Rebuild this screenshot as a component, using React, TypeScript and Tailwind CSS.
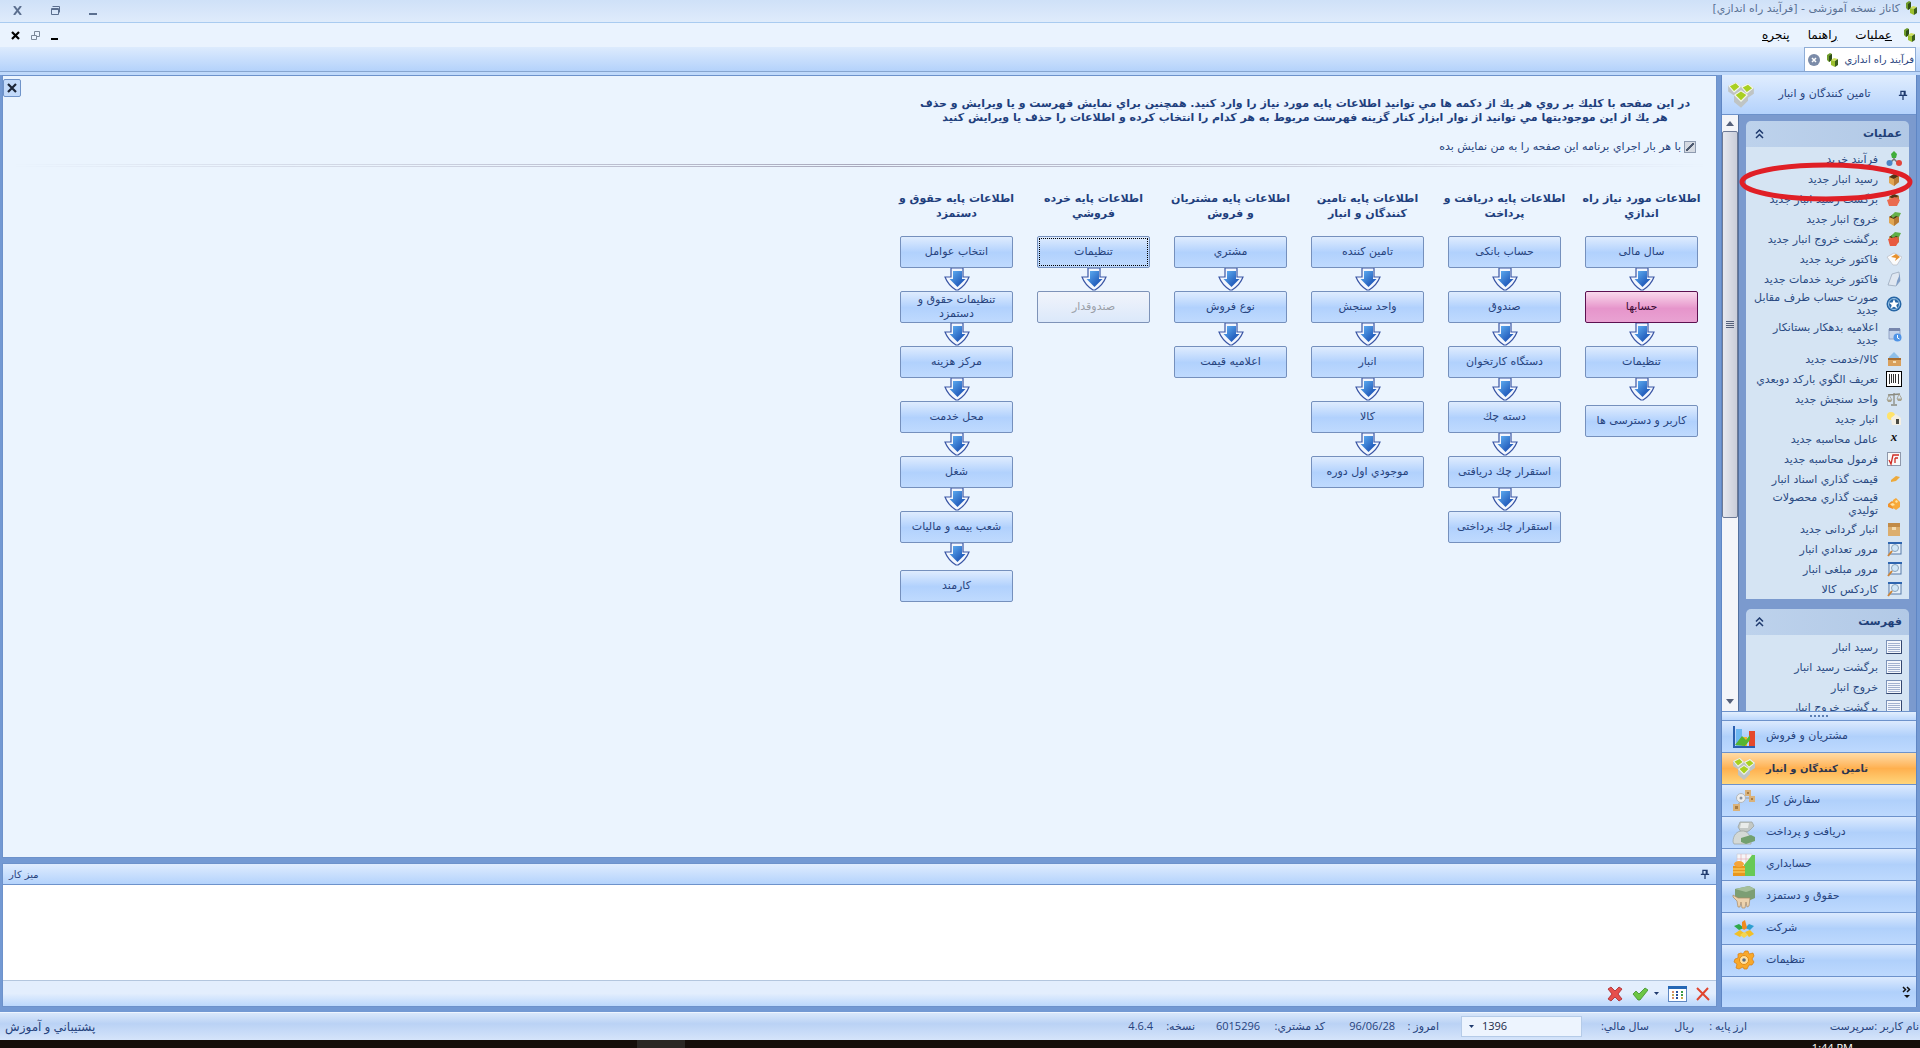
import { useState } from 'react'
import type { ReactNode } from 'react'

type Step = { label: string; state?: 'active' | 'focused' | 'disabled'; spaced?: boolean }

interface Column {
  title: [string, string]
  steps: Step[]
}

const COLUMNS: Column[] = [
  {
    title: ['اطلاعات مورد نیاز راه', 'اندازي'],
    steps: [
      { label: 'سال مالی' },
      { label: 'حسابها', state: 'active' },
      { label: 'تنظیمات' },
      { label: 'كاربر و دسترسی ها', spaced: true },
    ],
  },
  {
    title: ['اطلاعات پایه دریافت و', 'پرداخت'],
    steps: [
      { label: 'حساب بانكی' },
      { label: 'صندوق' },
      { label: 'دستگاه كارتخوان' },
      { label: 'دسته چك' },
      { label: 'استقرار چك دریافتی' },
      { label: 'استقرار چك پرداختی' },
    ],
  },
  {
    title: ['اطلاعات پایه تامین', 'كنندگان و انبار'],
    steps: [
      { label: 'تامین كننده' },
      { label: 'واحد سنجش' },
      { label: 'انبار' },
      { label: 'كالا' },
      { label: 'موجودي اول دوره' },
    ],
  },
  {
    title: ['اطلاعات پایه مشتریان', 'و فروش'],
    steps: [{ label: 'مشتري' }, { label: 'نوع فروش' }, { label: 'اعلامیه قیمت' }],
  },
  {
    title: ['اطلاعات پایه خرده', 'فروشي'],
    steps: [
      { label: 'تنظیمات', state: 'focused' },
      { label: 'صندوقدار', state: 'disabled' },
    ],
  },
  {
    title: ['اطلاعات پایه حقوق و', 'دستمزد'],
    steps: [
      { label: 'انتخاب عوامل' },
      { label: 'تنظیمات حقوق و دستمزد' },
      { label: 'مركز هزینه' },
      { label: 'محل خدمت' },
      { label: 'شغل' },
      { label: 'شعب بیمه و مالیات' },
      { label: 'كارمند', spaced: true },
    ],
  },
]

function Logo() {
  return (
    <svg className="h-4 w-4 shrink-0" viewBox="0 0 16 16">
      <path d="M3 3l3-2 2 1v6L5 10 3 8z" fill="#6f9c2c" />
      <path d="M5 4l3-2v6l-3 2z" fill="#2f4d18" />
      <path d="M7 8l3-2 4 1-3 2z" fill="#cfe05a" />
      <path d="M7 8l4 1v6l-4-2z" fill="#9cc02e" />
      <path d="M11 9l3-2v6l-3 2z" fill="#3c5f1c" />
    </svg>
  )
}

function Box({ arrow }: { arrow?: string }) {
  return (
    <>
      <path d="M3 6l5-3 5 2v6l-5 4-5-3z" fill="#e0a552" />
      <path d="M3 6l5 2 5-3-5-2z" fill="#4f3416" />
      <path d="M8 8l5-3v6l-5 4z" fill="#b87a34" />
      {arrow && <path d="M5 5l4-4 6 1-2 4-3-1-3 2z" fill={arrow} />}
    </>
  )
}

function Lens() {
  return (
    <>
      <rect x="3" y="2" width="12" height="11" fill="#e6f0fa" stroke="#587aa8" />
      <path d="M2 1h14v2H2z" fill="#2f66b0" />
      <circle cx="9" cy="7" r="3.500" fill="#cfe6f8" stroke="#8aa3ba" />
      <path d="M6 10l-4 5" stroke="#c9843a" strokeWidth="2" />
    </>
  )
}

function List() {
  return (
    <>
      <rect x=".5" y="1.500" width="15" height="13" fill="#f4f7fc" stroke="#7c93b8" />
      <path d="M15.500 1.500v13H.5" fill="none" stroke="#33466e" />
      <path d="M2 4.500h12M2 6.500h12M2 8.500h12M2 10.500h12M2 12.500h12" stroke="#a3b2d0" />
    </>
  )
}

interface Item {
  lines: string[]
  icon: ReactNode
  marked?: boolean
}

const OPERATIONS: Item[] = [
  {
    lines: ['فرآیند خرید'],
    icon: (
      <>
        <path d="M8 5v4M8 8l-4 4M8 8l4 4" stroke="#777" strokeWidth="1.500" />
        <path d="M8 0l3 3-1 4H6L5 3z" fill="#3fae3a" />
        <circle cx="3.500" cy="12" r="3" fill="#4d86c6" />
        <circle cx="13" cy="12" r="3" fill="#e2463c" />
      </>
    ),
  },
  { lines: ['رسید انبار جدید'], icon: <Box />, marked: true },
  {
    lines: ['برگشت رسید انبار جدید'],
    icon: (
      <>
        <Box />
        <path d="M1 9l8-3 5 3-3 6H3z" fill="#ea6a4f" />
      </>
    ),
  },
  { lines: ['خروج انبار جدید'], icon: <Box arrow="#66b04a" /> },
  {
    lines: ['برگشت خروج انبار جدید'],
    icon: (
      <>
        <Box arrow="#5fae48" />
        <path d="M2 8l8-2 3 4-3 5H4z" fill="#e8593f" />
      </>
    ),
  },
  {
    lines: ['فاكتور خرید جدید'],
    icon: (
      <>
        <path d="M1 6l7-4 8 4-5 8-4 0z" fill="#fbfbfb" stroke="#b9bcc4" strokeWidth=".7" />
        <path d="M5 6l5-3 4 3-5 4 1-3z" fill="#e8912c" />
      </>
    ),
  },
  {
    lines: ['فاكتور خرید خدمات جدید'],
    icon: (
      <>
        <path d="M6 3l7-2 1 9-4 5-8-1z" fill="#dfe7f1" stroke="#9aa9bd" strokeWidth=".8" />
        <path d="M10 15l4-5V3l-3 7z" fill="#7d9dc8" />
      </>
    ),
  },
  {
    lines: ['صورت حساب طرف مقابل', 'جدید'],
    icon: (
      <>
        <circle cx="8" cy="8" r="7.500" fill="#2565a5" />
        <circle cx="8" cy="8" r="5.500" fill="none" stroke="#9cc7ea" />
        <path d="M8 3l1.500 3.500 3.500.3-2.700 2.200.9 3.600L8 10.700l-3.200 1.900.9-3.600L3 6.800l3.500-.3z" fill="#fff" />
      </>
    ),
  },
  {
    lines: ['اعلامیه بدهكار بستانكار', 'جدید'],
    icon: (
      <>
        <path d="M3 3h11v10H3z" fill="#c4d2ea" stroke="#8496bd" strokeWidth=".8" />
        <path d="M3 2h11v3H3z" fill="#7686ad" />
        <circle cx="11.500" cy="11.500" r="4" fill="#4f93e6" />
        <path d="M11.500 9v3l2 1" stroke="#fff" fill="none" />
      </>
    ),
  },
  {
    lines: ['كالا/خدمت جدید'],
    icon: (
      <>
        <path d="M3 6l5-5 5 5v3H3z" fill="#8fbfe8" />
        <path d="M2 7h13v8H2z" fill="#d9a05c" />
        <path d="M2 7h13v2H2z" fill="#a76b2d" />
        <path d="M7 10h3v2H7z" fill="#f4dfb8" />
      </>
    ),
  },
  {
    lines: ['تعریف الگوي باركد دوبعدي'],
    icon: (
      <>
        <rect x=".5" y=".5" width="15" height="15" fill="#fff" stroke="#000" />
        <path d="M3.500 3v10M5.500 3v9M7.500 3v9M9.500 3v9M12.500 3v10" stroke="#333" />
      </>
    ),
  },
  {
    lines: ['واحد سنجش جدید'],
    icon: (
      <>
        <path d="M8 2v11M5 14h6M2 4l12-1" stroke="#8b8b80" strokeWidth="1.300" />
        <path d="M3 4L1 9h5L3 4M13 3l-2 5h5l-3-5" fill="none" stroke="#a09a86" strokeWidth=".8" />
        <path d="M1 9h5l-1 2H2zM11 8h5l-1 2h-3z" fill="#a9a38d" />
      </>
    ),
  },
  {
    lines: ['انبار جدید'],
    icon: (
      <>
        <circle cx="5" cy="5" r="4" fill="#ffe36a" />
        <path d="M5 7l5-4 5 4v7H6z" fill="#f3efe4" />
        <path d="M10 8h3v5h-3z" fill="#4a4a42" />
      </>
    ),
  },
  {
    lines: ['عامل محاسبه جدید'],
    icon: (
      <text x="8" y="10" textAnchor="middle" fontSize="13" fontWeight="bold" fontStyle="italic" fontFamily="Liberation Serif, serif" fill="#111">
        x
      </text>
    ),
  },
  {
    lines: ['فرمول محاسبه جدید'],
    icon: (
      <>
        <rect x="1.500" y="1.500" width="13" height="13" fill="#f8f8f8" stroke="#8e98ab" />
        <path d="M3 9l2 4 2-9h6M9 7h3M9 7v5" fill="none" stroke="#d02c24" strokeWidth="1.300" />
      </>
    ),
  },
  { lines: ['قیمت گذاري اسناد انبار'], icon: <path d="M5 9l5-4 4 1-4 4-5 1z" fill="#eda93b" /> },
  {
    lines: ['قیمت گذاري محصولات', 'تولیدي'],
    icon: (
      <>
        <path d="M2 8l4-3 4 3-3 5-5-2z" fill="#f0932b" />
        <path d="M7 4l3-2 4 4v5l-4 3-4-3z" fill="#f7a93a" />
        <path d="M4 8l3-1 2 2-3 1zM9 5l2-1 1 2-2 1z" fill="#ffe3a0" />
      </>
    ),
  },
  {
    lines: ['انبار گردانی جدید'],
    icon: (
      <>
        <path d="M2 2h12v13H2z" fill="#dcae6e" />
        <path d="M2 2h12v4H2z" fill="#c18b48" />
        <path d="M6 6h4v3H6z" fill="#f2dbb0" />
      </>
    ),
  },
  { lines: ['مرور تعدادي انبار'], icon: <Lens /> },
  { lines: ['مرور مبلغی انبار'], icon: <Lens /> },
  { lines: ['كاردكس كالا'], icon: <Lens /> },
]

const LISTS: Item[] = [
  { lines: ['رسید انبار'], icon: <List /> },
  { lines: ['برگشت رسید انبار'], icon: <List /> },
  { lines: ['خروج انبار'], icon: <List /> },
  { lines: ['برگشت خروج انبار'], icon: <List /> },
]

function Supply() {
  return (
    <>
      <path d="M1 4l7-3 4 4v5l-5 3-6-4zM12 5l6-3 5 4v5l-6 4-5-4zM6 12l6-4 6 4v5l-6 6-6-5z" fill="#bfc4c4" />
      <path d="M1 4l7-3 4 4-6 5zM12 5l6-3 5 4-6 5zM6 12l6-4 6 4-6 6z" fill="#f3f6ea" />
      <path d="M2.500 4.500l5-2.500 3 3-4.500 3.500zM13.500 5.500l4.500-2.300 3.500 3L17 9.500zM7.500 12l4.500-3 4.500 3-4.500 4.500z" fill="#a9d021" />
    </>
  )
}

const MODULES: { label: string; icon: ReactNode }[] = [
  {
    label: 'مشتریان و فروش',
    icon: (
      <>
        <path d="M2 1v21h21" fill="none" stroke="#2a5fb0" strokeWidth="2" />
        <path d="M4 4h6v17H4z" fill="#6db7f2" />
        <path d="M10 12h5v9h-5z" fill="#f3b72c" />
        <path d="M17 6h6v15h-6z" fill="#e5482c" />
        <path d="M3 20l7-9 4 4 4-5v5l-5 6z" fill="#55b531" />
      </>
    ),
  },
  { label: 'تامین كنندگان و انبار', icon: <Supply /> },
  {
    label: 'سفارش كار',
    icon: (
      <>
        <path d="M5 18l5-9h10" fill="none" stroke="#9a9a9a" />
        <path d="M1 15h7v7H1zM13 1h6v6h-6zM17 7h6v6h-6z" fill="#dab27a" />
        <path d="M3 17h3v3H3zM15 3h2v2h-2zM19 9h2v2h-2z" fill="#a87c42" />
        <circle cx="9" cy="9" r="4.500" fill="#eceeef" stroke="#b3b7bb" />
        <circle cx="9" cy="9" r="1.500" fill="#8c93a0" />
      </>
    ),
  },
  {
    label: 'دریافت و پرداخت',
    icon: (
      <>
        <path d="M8 1h12l2 4-4 4-3 2H9L6 6z" fill="#c3c8c5" stroke="#979e99" strokeWidth=".7" />
        <path d="M9 2l8 0-1 5H8z" fill="#e9ecea" />
        <path d="M1 21c0-7 4-11 9-11s6 2 9 7v6H2z" fill="#d4d9d6" stroke="#9ba29d" strokeWidth=".7" />
        <path d="M9 17l10-3 4 2v4l-9 3-5-2z" fill="#72a06f" />
      </>
    ),
  },
  {
    label: 'حسابداري',
    icon: (
      <>
        <path d="M5 1h15v14H5z" fill="#f6f6f8" stroke="#c8ccd8" strokeWidth=".7" />
        <path d="M9 1v14M14 1v14M5 6h14" stroke="#e3aeb5" strokeWidth=".7" />
        <path d="M12 12l5-6 3-4h3v21H12z" fill="#68c956" />
        <path d="M1 13h12v10H1z" fill="#e9971e" />
        <ellipse cx="7" cy="11" rx="5" ry="3" fill="#f5a53a" />
        <path d="M1 16h12M1 19h12" stroke="#ffdc73" />
      </>
    ),
  },
  {
    label: 'حقوق و دستمزد',
    icon: (
      <>
        <path d="M3 4l14-3 6 3v9l-7 3-13-2z" fill="#7c9e74" />
        <path d="M3 4l14-3 6 3-9 3z" fill="#a5bf9b" />
        <path d="M1 10l5 3h12l-1 8-2 1-1-5-1 6h-3l-1-6-1 5H6l-1-6-4-4z" fill="#ecd2ae" stroke="#a98b66" strokeWidth=".7" />
      </>
    ),
  },
  {
    label: 'شركت',
    icon: (
      <>
        <path d="M2 9l5-2 5 4-5 2z" fill="#2fa84a" />
        <path d="M22 9l-5-2-4 4 5 2z" fill="#2e9fd0" />
        <path d="M10 5l3-2 2 8-3 2-2-2z" fill="#f08a1f" />
        <path d="M2 17l6-4 4 3-4 4zM13 15l5-2 4 4-5 3z" fill="#f2bf27" />
        <path d="M8 18l4-3 4 3-4 3z" fill="#f5d54d" />
      </>
    ),
  },
  {
    label: 'تنظیمات',
    icon: (
      <>
        <path
          d="M13 2l3 0 1 3 4-1 1 3-2 3 2 3-2 3-3 0-2 4-3 0-1-2-4 2-3-1 1-4-3-2 1-3 3-1 0-4 3-1 2 1z"
          fill="#f8a82a"
          stroke="#d97d10"
          strokeWidth=".7"
        />
        <circle cx="12" cy="11" r="4.500" fill="#ffe0a0" stroke="#e08a15" />
        <circle cx="12" cy="11" r="1.800" fill="#5a6a80" />
      </>
    ),
  },
]

function Pin() {
  return (
    <svg className="h-[10px] w-[10px]" viewBox="0 0 12 12" fill="none" stroke="#1f3a6e" strokeWidth="1.500">
      <path d="M3.500 1.500h5v5h-5zM7.500 1.500v5M1 6.500h10M6 7v5" />
    </svg>
  )
}

function DownArrow() {
  return (
    <svg className="mx-auto block h-[23px] w-[26px]" viewBox="0 0 26 23">
      <defs>
        <linearGradient id="arrowFill" x1="0" y1="0" x2="1" y2="1">
          <stop offset="0" stopColor="#63b4f6" />
          <stop offset="1" stopColor="#0d3fa8" />
        </linearGradient>
      </defs>
      <path d="M7 0v9H1q3 8 11 13h2q8-5 11-13h-6V0z" fill="#f3f7fe" stroke="#3a56a5" strokeWidth="1.200" />
      <path d="M9 3h9v8h3.500L13.500 19 5.500 11H9z" fill="url(#arrowFill)" />
    </svg>
  )
}

function StepButton({ step }: { step: Step }) {
  let look = 'border-[#7590bd] bg-linear-to-b from-[#dfecfe] from-0% via-[#b1d1fd] via-52% to-[#bfdafe] text-[#27437d]'
  if (step.state === 'active') look = 'border-[#5c1050] bg-linear-to-b from-[#f8d9ec] from-0% via-[#e695cb] via-55% to-[#e9a2d2] text-[#3a0b33]'
  if (step.state === 'disabled') look = 'border-[#7e93b8] bg-linear-to-b from-[#f1f4fb] to-[#dbe8fa] text-[#9a9fa8]'
  return (
    <button
      type="button"
      disabled={step.state === 'disabled'}
      className={`flex h-8 w-[113px] items-center justify-center rounded-[2px] border p-px ${look}`}
    >
      <span
        className={
          step.state === 'focused'
            ? 'flex h-full w-full items-center justify-center border border-dotted border-black leading-[14px]'
            : 'leading-[14px]'
        }
      >
        {step.label}
      </span>
    </button>
  )
}

function Group({ title, items }: { title: string; items: Item[] }) {
  return (
    <section className="shrink-0">
      <h2 className="flex h-[26px] items-center justify-between rounded-t-[5px] bg-linear-to-l from-[#b2c9e6] to-[#bdd2ec] px-[7px] text-[11px] font-bold text-[#1f3f78]">
        {title}
        <button type="button" aria-label={title} className="px-[2px]">
          <svg className="h-[10px] w-[9px]" viewBox="0 0 9 10" fill="none" stroke="#1f3a6e" strokeWidth="1.500">
            <path d="M1 4.500L4.500 1 8 4.500M1 9l3.500-3.500L8 9" />
          </svg>
        </button>
      </h2>
      <ul className="bg-[#d5e4f3] pt-[2px]">
        {items.map((item) => (
          <li key={item.lines[0]} className="relative">
            <a
              href="#"
              className={`flex items-center gap-2 pr-[7px] leading-[13px] whitespace-nowrap text-[#2a4a82] ${item.lines.length > 1 ? 'h-[30px]' : 'h-5'}`}
            >
              <svg className="h-4 w-4 shrink-0" viewBox="0 0 16 16">
                {item.icon}
              </svg>
              <span>
                {item.lines.map((line) => (
                  <span key={line} className="block">
                    {line}
                  </span>
                ))}
              </span>
            </a>
            {item.marked && (
              <svg className="pointer-events-none absolute -top-2 -left-2 z-10 h-[42px] w-[176px]" viewBox="0 0 176 42">
                <ellipse cx="88" cy="21" rx="84" ry="17" fill="none" stroke="#e01f26" strokeWidth="5" />
              </svg>
            )}
          </li>
        ))}
      </ul>
    </section>
  )
}

function Sidebar() {
  const [current, setCurrent] = useState(1)
  return (
    <aside className="flex w-[196px] shrink-0 flex-col border-x border-[#5f86c4] bg-[#7b9ace]">
      <header className="flex h-10 shrink-0 items-center justify-between border-b border-[#6d92cb] bg-linear-to-b from-[#e0edfe] to-[#b4d2fc] pr-1 pl-[5px] text-[#27437d]">
        <span className="px-1">
          <Pin />
        </span>
        <span>تامین كنندگان و انبار</span>
        <svg className="h-7 w-7" viewBox="0 0 24 24">
          <Supply />
        </svg>
      </header>

      <div className="flex min-h-0 flex-1">
        <div className="flex min-w-0 flex-1 flex-col gap-[10px] overflow-hidden px-[7px] pt-[6px]">
          <Group title="عملیات" items={OPERATIONS} />
          <Group title="فهرست" items={LISTS} />
        </div>
        <div className="flex w-[17px] shrink-0 flex-col border-r border-[#54719f] bg-[#f4f5f9]">
          <svg className="h-4 w-4" viewBox="0 0 16 16">
            <path d="M4 11l4-5 4 5z" fill="#55607a" />
          </svg>
          <div className="flex flex-[2] flex-col items-center justify-center gap-px rounded-[2px] border border-[#6d7a96] bg-linear-to-r from-[#e6e8ef] to-[#c9cdd9]">
            <i className="h-px w-2 bg-[#56617b]" />
            <i className="h-px w-2 bg-[#56617b]" />
            <i className="h-px w-2 bg-[#56617b]" />
            <i className="h-px w-2 bg-[#56617b]" />
          </div>
          <div className="flex flex-1 flex-col justify-end">
            <svg className="h-5 w-4" viewBox="0 0 16 20">
              <path d="M4 8l4 5 4-5z" fill="#55607a" />
            </svg>
          </div>
        </div>
      </div>

      <div className="flex h-[9px] shrink-0 items-center justify-center gap-[2px] border-t border-[#6d92cb] bg-linear-to-b from-[#e3effe] to-[#bcd7fc]">
        <i className="h-[2px] w-[2px] bg-[#5e7fb3]" />
        <i className="h-[2px] w-[2px] bg-[#5e7fb3]" />
        <i className="h-[2px] w-[2px] bg-[#5e7fb3]" />
        <i className="h-[2px] w-[2px] bg-[#5e7fb3]" />
        <i className="h-[2px] w-[2px] bg-[#5e7fb3]" />
      </div>
      <nav className="shrink-0">
        {MODULES.map((m, i) => (
          <button
            key={m.label}
            type="button"
            onClick={() => setCurrent(i)}
            className={`flex h-8 w-full items-center justify-end gap-[10px] border-t border-[#6d92cb] bg-linear-to-b pl-[10px] ${
              i === current
                ? 'from-[#ffdca6] from-0% via-[#ffb04e] via-50% to-[#ffd57a] text-[10px] font-bold text-[#2a3550]'
                : 'from-[#dceafe] from-0% via-[#b0d0fb] via-50% to-[#bdd9fe] text-[#27437d]'
            }`}
          >
            {m.label}
            <svg className="h-6 w-6" viewBox="0 0 24 24">
              {m.icon}
            </svg>
          </button>
        ))}
      </nav>
      <div className="flex h-[31px] shrink-0 items-center border-t border-[#6d92cb] bg-linear-to-b from-[#dceafe] from-0% via-[#b0d0fb] via-50% to-[#bdd9fe] px-1">
        <button type="button" aria-label="بیشتر">
          <svg className="h-3 w-[10px]" viewBox="0 0 10 12">
            <path d="M1 1l2.500 2.500L1 6M5 1l2.500 2.500L5 6" fill="none" stroke="#111" strokeWidth="1.500" />
            <path d="M2 9h6l-3 3z" fill="#111" />
          </svg>
        </button>
      </div>
    </aside>
  )
}

function StartupProcess() {
  const [show, setShow] = useState(true)
  return (
    <main className="relative min-h-0 flex-1 overflow-hidden border border-[#6d92cb] bg-[#ebf4fe]">
      <button
        type="button"
        aria-label="بستن"
        className="absolute top-[3px] left-0 flex h-[18px] w-[18px] items-center justify-center rounded-[2px] border border-[#6f93c9] bg-[#c3dafa]"
      >
        <svg className="h-[10px] w-[10px]" viewBox="0 0 10 10" stroke="#1b2436" strokeWidth="2.200">
          <path d="M1 1l8 8M9 1L1 9" />
        </svg>
      </button>
      <div className="pt-[21px] pr-[20px]">
        <p className="w-[782px] text-center leading-[14px] font-bold whitespace-nowrap text-[#1f3f7d]">
          در این صفحه با كلیك بر روي هر یك از دكمه ها مي توانید اطلاعات پایه مورد نیاز را وارد كنید. همچنین براي نمایش فهرست و یا ویرایش و حذف
          <br />
          هر یك از این موجودیتها مي توانید از نوار ابزار كنار گزینه فهرست مربوط به هر كدام را انتخاب كرده و اطلاعات را حذف یا ویرایش كنید
        </p>
        <label className="mt-[14px] flex h-4 items-center gap-[3px] text-[#27437d]">
          <input
            type="checkbox"
            checked={show}
            onChange={(e) => setShow(e.target.checked)}
            className="h-3 w-3 appearance-none border border-[#8e9bb0] bg-[#d5dae2] bg-[linear-gradient(135deg,transparent_40%,#4d5a70_40%,#4d5a70_60%,transparent_60%)] bg-[length:8px_8px] bg-center bg-no-repeat"
          />
          با هر بار اجراي برنامه این صفحه را به من نمایش بده
        </label>
      </div>
      <div className="mx-2 mt-[9px] h-[3px] border-y border-[#a9a9bd] mask-[linear-gradient(to_right,transparent,black_50%,transparent)]" />

      <div className="mt-6 flex gap-[14px] pr-[13px]">
        {COLUMNS.map((column) => (
          <section key={column.title[0]} className="flex w-[123px] flex-col items-center">
            <h2 className="mb-[15px] text-center leading-[15px] font-bold whitespace-nowrap text-[#1f3f7d]">
              {column.title[0]}
              <br />
              {column.title[1]}
            </h2>
            {column.steps.map((step, i) => (
              <div key={step.label} className={step.spaced ? 'flex flex-col gap-1' : ''}>
                {i > 0 && <DownArrow />}
                <StepButton step={step} />
              </div>
            ))}
          </section>
        ))}
      </div>
    </main>
  )
}

function Desk() {
  return (
    <section className="flex h-[144px] shrink-0 flex-col border border-[#6d92cb] bg-white">
      <header className="flex h-[21px] items-center justify-between border-b border-[#6d92cb] bg-linear-to-b from-[#dfecfe] to-[#b4d3fc] px-[6px] text-[10px] text-[#27437d]">
        <Pin />
        <h2>میز كار</h2>
      </header>
      <div className="flex-1" />
      <footer className="flex h-[26px] items-center gap-[9px] border-t border-[#b3c6de] bg-linear-to-b from-[#e3eefd] from-50% to-[#bcd8fc] px-[6px]">
        <button type="button" aria-label="حذف">
          <svg className="h-[14px] w-[14px]" viewBox="0 0 14 14" stroke="#e0452f" strokeWidth="2">
            <path d="M1 1l12 12M12 1L1 13" />
          </svg>
        </button>
        <button type="button" aria-label="جدول">
          <svg className="h-4 w-[19px]" viewBox="0 0 19 16">
            <rect x=".5" y=".5" width="18" height="15" fill="#fff" stroke="#5f88c2" />
            <path d="M0 0h19v3H0z" fill="#2467b5" />
            <path d="M4 5h2v2H4zM4 11h2v2H4z" fill="#d98d6b" />
            <path d="M8 5h2v2H8zM8 8h2v2H8zM8 11h2v2H8z" fill="#274f9c" />
            <path d="M13 5h2v2h-2zM13 8h2v2h-2z" fill="#3c9a45" />
            <path d="M4 8h2v2H4zM13 11h2v2h-2z" fill="#c8a84c" />
          </svg>
        </button>
        <button type="button" aria-label="تایید" className="flex items-center gap-[6px]">
          <svg className="h-[3px] w-[5px]" viewBox="0 0 5 3">
            <path d="M0 0h5L2.500 3z" fill="#1f3a6e" />
          </svg>
          <svg className="h-[14px] w-4" viewBox="0 0 16 14">
            <path d="M1 7l3-3 3 3 6-6 3 2-8 10-2 0z" fill="#6cc644" stroke="#3f8f2a" strokeWidth=".8" />
          </svg>
        </button>
        <button type="button" aria-label="لغو">
          <svg className="h-4 w-4" viewBox="0 0 16 16">
            <path d="M1 3l3-2 4 4 4-4 3 2-4 5 4 5-3 2-4-4-4 4-3-2 4-5z" fill="#e6504c" stroke="#a8262a" strokeWidth=".8" />
          </svg>
        </button>
      </footer>
    </section>
  )
}

function StatusBar() {
  return (
    <footer className="flex h-[28px] shrink-0 items-center border-t border-[#eef5ff] bg-linear-to-b from-[#d9e7fa] from-0% via-[#bad2f5] via-40% to-[#d5e4fa] pr-px pl-[5px] font-['Open_Sans','DejaVu_Sans',sans-serif] whitespace-nowrap text-[#27437d]">
      <span className="w-[172px]">نام كاربر :سرپرست</span>
      <span className="w-[53px]">ارز پایه :</span>
      <span className="w-[45px]">ریال</span>
      <label htmlFor="year" className="w-[67px]">
        سال مالي:
      </label>
      <span className="relative w-[143px]">
        <select
          id="year"
          defaultValue="1396"
          dir="ltr"
          className="h-[21px] w-[121px] appearance-none border border-[#b5cbe8] bg-[#edf4fe] pl-5 text-[#1c2a48]"
        >
          <option>1396</option>
          <option>1397</option>
        </select>
        <svg className="pointer-events-none absolute top-[9px] left-[30px] h-[3px] w-[5px]" viewBox="0 0 5 3">
          <path d="M0 0h5L2.500 3z" fill="#1f3a6e" />
        </svg>
      </span>
      <span className="w-[44px]">امروز :</span>
      <span className="w-[70px] text-right" dir="ltr">
        96/06/28
      </span>
      <span className="w-[65px]">كد مشتري:</span>
      <span className="w-[65px]">6015296</span>
      <span className="w-[42px]">نسخه:</span>
      <span>4.6.4</span>
      <a href="#" className="mr-auto text-[12px]">
        پشتیباني و آموزش
      </a>
    </footer>
  )
}

export default function App() {
  return (
    <div
      dir="rtl"
      className="flex h-screen min-h-[720px] flex-col overflow-hidden bg-[#7399d3] font-['DejaVu_Sans',sans-serif] text-[11px]"
    >
      <div className="flex h-[23px] shrink-0 items-start gap-[3px] border-b border-[#a9cbf0] bg-linear-to-b from-[#cfe1f8] to-[#dfebfb] pr-px pl-[13px] text-[#5a7194]">
        <Logo />
        <span className="leading-[18px]">كاناز نسخه آموزشی - [فرآیند راه اندازي]</span>
        <div className="mr-auto flex h-5 items-center gap-[29px] text-[#5b6f8f]">
          <button type="button" aria-label="كوچك" className="flex h-[9px] w-2 items-end">
            <i className="h-[2px] w-full bg-current" />
          </button>
          <button type="button" aria-label="بازگرداندن">
            <svg className="h-[9px] w-[9px]" viewBox="0 0 9 9" fill="none" stroke="currentColor">
              <path d="M.5 2.500h7v6h-7zM1.500 .5h7v6M.5 3.500h7" />
            </svg>
          </button>
          <button type="button" aria-label="خروج">
            <svg className="h-[9px] w-[9px]" viewBox="0 0 9 9" stroke="currentColor" strokeWidth="2">
              <path d="M1 0l7 9M8 0L1 9" />
            </svg>
          </button>
        </div>
      </div>

      <div className="flex h-6 shrink-0 items-center bg-[#eaf3fe] pr-[3px] pl-[11px] text-[12px] text-black">
        <Logo />
        <nav className="mr-[9px] flex gap-[18px]">
          <a href="#"><u>ع</u>ملیات</a>
          <a href="#"><u>ر</u>اهنما</a>
          <a href="#">پنجر<u>ه</u></a>
        </nav>
        <div className="mr-auto flex items-center gap-[11px]">
          <button type="button" aria-label="كوچك كردن پنجره" className="flex h-[9px] w-[7px] items-end">
            <i className="h-[2px] w-full bg-black" />
          </button>
          <button type="button" aria-label="بازگرداندن پنجره">
            <svg className="h-[9px] w-[9px]" viewBox="0 0 9 9" fill="none" stroke="#7b8798">
              <path d="M.5 4.500h5v4h-5zM3.500 4V.5h5v5H6" />
            </svg>
          </button>
          <button type="button" aria-label="بستن پنجره">
            <svg className="h-[9px] w-[9px]" viewBox="0 0 9 9" stroke="black" strokeWidth="2.200">
              <path d="M1 1l7 7M8 1L1 8" />
            </svg>
          </button>
        </div>
      </div>

      <div className="flex h-[25px] shrink-0 items-end border-b border-[#86a5d0] bg-linear-to-b from-[#ddebfd] to-[#b4d2fb] pr-1">
        <div className="flex h-6 items-center gap-1 border-x border-t border-[#8fadd6] bg-white px-px text-[10px] text-[#27437d]">
          <span>فرآیند راه اندازي</span>
          <Logo />
          <button type="button" aria-label="بستن برگه" className="pl-[2px]">
            <svg className="h-3 w-3" viewBox="0 0 12 12">
              <circle cx="6" cy="6" r="6" fill="#7b8ba8" />
              <path d="M4 4l4 4M8 4l-4 4" stroke="#fff" strokeWidth="1.500" />
            </svg>
          </button>
        </div>
      </div>
      <div className="h-[3px] shrink-0 bg-[#bfd9fb]" />

      <div className="flex min-h-0 flex-1 gap-1 pr-[3px] pb-[5px] pl-[2px]">
        <Sidebar />
        <div className="flex min-w-0 flex-1 flex-col gap-[5px]">
          <StartupProcess />
          <Desk />
        </div>
      </div>

      <StatusBar />
      <div className="flex h-2 shrink-0 items-start overflow-hidden bg-[#150e0a] pr-[67px] leading-4 text-white">
        <time dir="ltr" className="font-['Open_Sans',sans-serif]">
          1:44 PM
        </time>
        <i className="mr-auto ml-[637px] h-2 w-12 bg-[#2a2724]" />
      </div>
    </div>
  )
}
